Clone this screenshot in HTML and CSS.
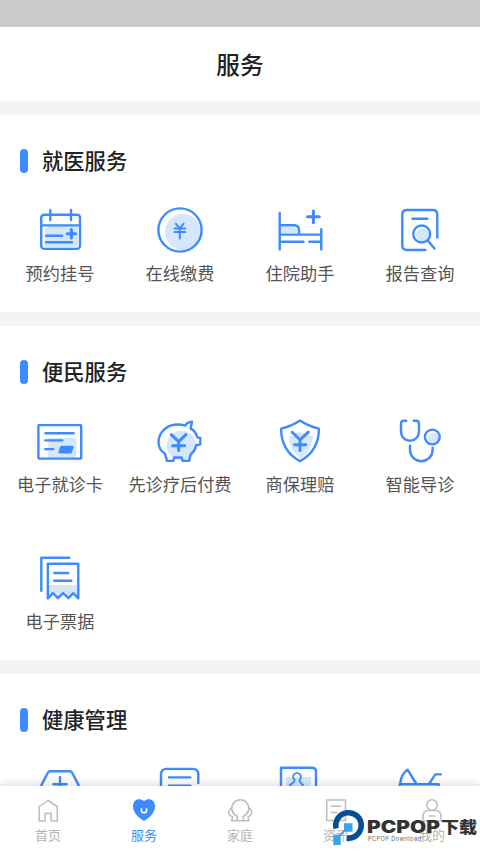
FILE: index.html
```html
<!DOCTYPE html>
<html lang="zh-CN">
<head>
<meta charset="utf-8">
<title>服务</title>
<link rel="stylesheet" href="styles.css">
</head>
<body>
<div class="app">
  <div class="status"></div>
  <header class="header">服务</header>
  <main class="content">
    <section class="section medical">
      <h2>就医服务</h2>
      <div class="grid">
        <div class="item">
          <svg class="icon" viewBox="0 0 60 56"><path class="tint" d="M15 26h3v-2h30v21H15z"/><rect x="11.2" y="12.7" width="38.8" height="34.200" rx="3"/><path d="M11.4 23.4h38.4M20.3 8v10M41 8v10M16 33.7h16M16 40.3h26"/><path class="bold" d="M37.2 31.7h8.4M41.4 27.5v8.4"/></svg>
          <span>预约挂号</span>
        </div>
        <div class="item">
          <svg class="icon" viewBox="0 0 60 56"><circle class="tint" cx="33" cy="30" r="18"/><circle cx="30" cy="28" r="21.6"/><path class="mid" d="M25.7 21.7l4 4.6 4-4.6M24.5 26.6h10.8M24.5 30h10.8M29.8 26.5v10"/></svg>
          <span>在线缴费</span>
        </div>
        <div class="item">
          <svg class="icon" viewBox="0 0 60 56"><path class="tint" d="M11 25h12q4 0 4 4v2H11z"/><path d="M9.7 11v36.4M9.7 23.3H24q5 0 5 5v4M9.7 32.6h41.6M51.3 27.3v20.1M9.7 39.7h23.8M39.3 39.7h12"/><path class="bold" d="M37.5 14.8h11.8M43.4 8.9v11.8"/></svg>
          <span>住院助手</span>
        </div>
        <div class="item">
          <svg class="icon" viewBox="0 0 60 56"><circle class="tint" cx="32.5" cy="33" r="6.5"/><path d="M47.3 35.5V12.5q0-4.5-4.5-4.5h-26q-4.5 0-4.5 4.5v31q0 4.5 4.5 4.5h18.5M22.5 16.7h14.8M37.7 38.5l6.8 8"/><circle cx="31.7" cy="32" r="8.5"/></svg>
          <span>报告查询</span>
        </div>
      </div>
    </section>
    <section class="section public">
      <h2>便民服务</h2>
      <div class="grid">
        <div class="item">
          <svg class="icon" viewBox="0 0 60 56"><path class="tint" d="M18.3 25h28v20h-28z"/><rect x="8.4" y="12.1" width="42.8" height="33.5" rx=".5"/><path d="M15.3 20.3h28.4M15.3 27.4h17M15.3 36.1h8"/><path class="solid" d="M31.4 34h11l-1.8 5.3h-11z"/></svg>
          <span>电子就诊卡</span>
        </div>
        <div class="item">
          <svg class="icon" viewBox="0 0 60 56"><circle class="tint" cx="31.7" cy="32.7" r="15"/><path d="M35.3 12.6Q24 9.5 16 15Q8.5 20.5 8.5 29.5Q9 37 15 40.8L17 47.9h6.2l1-3.4h7.5l1 3.4H39l1.7-6.8Q45 38 46 32.5l4.3-1.2V25l-3-.6Q45.5 18 40.6 15.4L42 8.7Q37 9 35.3 12.6z"/><path class="bold" d="M21.3 21.6l7.4 7 7.2-7M28.6 28.6v9M22.6 32.7h12"/></svg>
          <span>先诊疗后付费</span>
        </div>
        <div class="item">
          <svg class="icon" viewBox="0 0 60 56"><path class="tint" d="M18.6 23.5q5 0 8-4 7-.8 12 3.5h4.5Q42 37 31 45 19.5 38 18.6 23.5z"/><path d="M30 7.6q-9 6-18.9 8Q11 38 30 48.3 49 38 48.9 15.6 39 13.6 30 7.6z"/><path class="bold" d="M22.2 19.2l7.8 7.6 8.3-7.6M30 26.8v10.7M24.5 31.7h11.3"/></svg>
          <span>商保理赔</span>
        </div>
        <div class="item">
          <svg class="icon" viewBox="0 0 60 56"><circle class="tint" cx="43.5" cy="25" r="5.6"/><path d="M16.3 7.8h-2.5Q11 7.8 11 10.5v8.2a9 9 0 0 0 18 0v-8.2q0-2.7-2.8-2.7h-2.5M20 32.7v4.2a11.3 11.3 0 0 0 22.6 0v-2.3"/><circle cx="42.3" cy="24" r="7.4"/></svg>
          <span>智能导诊</span>
        </div>
        <div class="item">
          <svg class="icon" viewBox="0 0 60 56"><path class="tint" d="M19 35h28v11l-4-3-5 4-5-4-5 4-4-4-5 3z"/><path d="M39.3 7.7h-28v33M17.8 48.4V13.8h30.5v34.6l-5-5.2-4.8 5-5.4-5-5.2 5-5-5zM24.3 23h14M24.3 30.7h17"/></svg>
          <span>电子票据</span>
        </div>
      </div>
    </section>
    <section class="section health">
      <h2>健康管理</h2>
      <div class="grid">
        <div class="item"><svg class="icon" viewBox="0 0 60 56"><path d="M8.500 29.700L18 11.500q.8-1.300 2-1.300h20q1.200 0 2 1.300l9.500 18.200M30 16v15M23.500 23.300h13"/></svg></div>
        <div class="item"><svg class="icon" viewBox="0 0 60 56"><path d="M11 35V13.500q0-5.600 5.600-5.600h26q5.700 0 5.700 5.600V22M19 16.400h21.300M19 24.700h21.300"/></svg></div>
        <div class="item"><svg class="icon" viewBox="0 0 60 56"><path class="tint" d="M15.700 16H41v20H15.700z"/><path d="M11 35V6.700h31q4 0 4 4V35"/><path class="thin" d="M24.500 18.800a3.900 3.900 0 1 1 5 0q-.2 2.600 3.400 5l-1 2M24.500 18.800q.5 2-4.500 5l1.500 3"/></svg></div>
        <div class="item"><svg class="icon" viewBox="0 0 60 56"><path d="M9.700 30V23.200h39V30M10.200 23Q11 13 17.500 8.700L25.800 22M39.300 22.600l6-9.200h5.500"/></svg></div>
      </div>
    </section>
  </main>
  <nav class="tabs">
    <div class="tab"><svg viewBox="0 0 28 28"><path d="M5.200 25V10.500L14 4.500l9.300 6V25h-6.200v-7.800h-6V25z"/></svg><span>首页</span></div>
    <div class="tab active"><svg viewBox="0 0 28 28"><path class="heart" d="M14 5.200C10 1.600 3 3 3 10.300 3 17.500 9.500 22.200 14 25c4.500-2.800 11-7.500 11-14.700C25 3 18 1.600 14 5.200z"/><path class="smile" d="M11.400 12.200v2a2.600 2.600 0 0 0 5.200 0v-2"/></svg><span>服务</span></div>
    <div class="tab"><svg viewBox="0 0 28 28"><path d="M9.800 19.500A8.500 8.500 0 1 1 18.800 19.500M5.200 12Q-.5 17.500 6.500 21L5.700 24.800h5.200l.6-4.300Q7.500 18.500 6.500 15M23.400 12q5.700 5.500-1.300 9l.8 3.800h-5.200l-.6-4.300q4-2 5-5.500M11 24.800h7"/></svg><span>家庭</span></div>
    <div class="tab"><svg viewBox="0 0 28 28"><path d="M4.700 4h18.800v20.500H4.700zM8.500 10.300h11M8.500 16.600h7"/></svg><span>资讯</span></div>
    <div class="tab"><svg viewBox="0 0 28 28"><circle cx="14" cy="9" r="5.300"/><path d="M5 25v-4.500q0-6 6-6h6q6 0 6 6V25zM10.500 20h7"/></svg><span>我的</span></div>
  </nav>
  <svg class="watermark" viewBox="0 0 154 44">
    <path class="ring" d="M10.200 22.500A12.700 12.700 0 1 1 20.800 32"/>
    <path class="link" d="M21 22.500L12 31"/>
    <path class="square" d="M18 17.300h8.500v8.400H18zM7.300 28.700h7.400V39H7.300z"/>
    <text class="brand" x="41" y="27.300" textLength="73" lengthAdjust="spacingAndGlyphs">PCPOP</text>
    <text class="brand-cn" x="115" y="27" textLength="36" lengthAdjust="spacingAndGlyphs">下载</text>
    <text class="brand-sub" x="42" y="34.600" textLength="53" lengthAdjust="spacing">PCPOP Download</text>
  </svg>
</div>
</body>
</html>
```
FILE: styles.css
```css
* { box-sizing: border-box; }
body { margin: 0; font-family: "Noto Sans CJK SC", sans-serif; background: #fff; }
svg { display: block; fill: none; stroke-linejoin: round; }
.app { position: relative; height: 853px; overflow: hidden; display: flex; flex-direction: column; }
.status { height: 26.6px; flex: none; background: #cacaca; }
.header { height: 74.4px; flex: none; display: flex; align-items: center; justify-content: center; font-size: 23.7px; font-weight: 500; color: #222; }
.content { flex: 1; min-height: 0; overflow: hidden; background: #f4f4f4; padding-top: 13.6px; display: flex; flex-direction: column; gap: 13.6px; }
.section { flex: none; background: #fff; }
.medical { height: 197.4px; }
.public { height: 334.4px; }
.health { height: 200px; }
h2 { margin: 0; height: 87.4px; padding: 34px 0 0 20px; display: flex; align-items: flex-start; gap: 14px; font-size: 21.3px; line-height: 22px; font-weight: 500; color: #222; }
h2::before { content: ""; width: 8px; height: 24px; border-radius: 4px; background: #3d8bff; }
.grid { display: grid; grid-template-columns: repeat(4, 120px); grid-auto-rows: 137px; }
.item { display: flex; flex-direction: column; align-items: center; white-space: nowrap; font-size: 17.2px; line-height: 26px; color: #555; gap: 2px; }
.icon { width: 60px; height: 56px; stroke: #3d8bff; stroke-width: 2.4; stroke-linecap: round; }
.icon .tint { fill: #d5e7ff; stroke: none; }
.icon .bold { stroke-width: 3; }
.icon .mid { stroke-width: 2; }
.icon .thin { stroke-width: 1.8; }
.icon .solid { fill: #3d8bff; }
.tabs { position: relative; height: 66.6px; flex: none; display: grid; grid-template-columns: repeat(5, 1fr); background: #fff; box-shadow: 0 -2px 9px rgba(0, 0, 0, .14); }
.tab { display: flex; flex-direction: column; align-items: center; padding-top: 9.6px; font-size: 13px; line-height: 20px; gap: 1px; color: #b5b5b5; }
.tab svg { width: 28px; height: 28px; stroke: #bdbdbd; stroke-width: 1.5; }
.tab.active { color: #3d8bff; }
.tab .heart { fill: #3d8bff; stroke: none; }
.tab .smile { stroke: #fff; stroke-width: 1.6; }
.watermark { position: absolute; left: 326px; top: 806px; width: 154px; height: 44px; }
.ring { stroke: #064f94; stroke-width: 5.6; }
.link { stroke: #3aa5e6; stroke-width: 2; }
.square { fill: #3aa5e6; }
.brand { font: 900 17px Inter, sans-serif; fill: #333; }
.brand-cn { font: 900 16px "Noto Sans CJK SC", sans-serif; fill: #333; }
.brand-sub { font: 5.6px Inter, sans-serif; fill: #666; }
```
